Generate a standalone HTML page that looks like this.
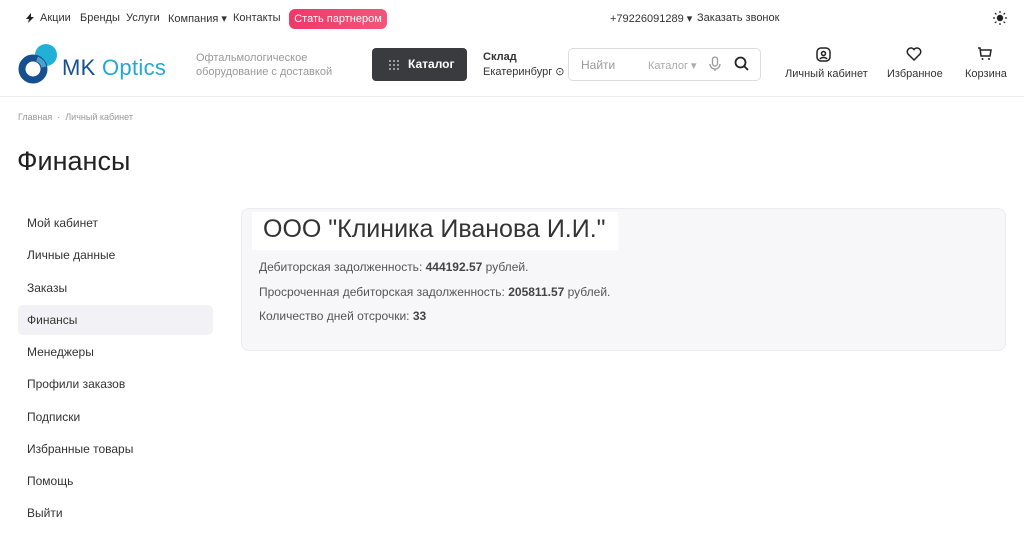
<!DOCTYPE html>
<html><head><meta charset="utf-8"><style>
*{margin:0;padding:0;box-sizing:border-box}
body{width:1024px;height:558px;background:#fff;font-family:"Liberation Sans","DejaVu Sans",sans-serif;color:#333;position:relative;overflow:hidden}
.a{position:absolute;white-space:nowrap}
.t{font-size:11px;color:#333}
.menu div{position:absolute;left:18px;width:195px;height:30px;line-height:30px;padding-left:9px;font-size:12px;color:#333;border-radius:5px}
</style></head><body>
<svg class="a" style="left:25px;top:13px" width="10" height="10" viewBox="0 0 10 10"><path d="M6 0L1 6h3L3 10l6-6H6z" fill="#222"/></svg>
<div class="a t" style="left:40px;top:12px">Акции</div>
<div class="a t" style="left:80px;top:12px">Бренды</div>
<div class="a t" style="left:126px;top:12px">Услуги</div>
<div class="a t" style="left:168px;top:12px">Компания ▾</div>
<div class="a t" style="left:233px;top:12px">Контакты</div>
<div class="a" style="left:289px;top:9px;width:98px;height:20px;border-radius:6px;background:linear-gradient(90deg,#f0386a,#f2557a);color:#fff;font-size:11px;line-height:20px;text-align:center">Стать партнером</div>
<div class="a t" style="left:610px;top:12px">+79226091289 ▾</div>
<div class="a t" style="left:697px;top:12px">Заказать звонок</div>
<svg class="a" style="left:993px;top:11px" width="14" height="14" viewBox="0 0 14 14"><circle cx="7" cy="7" r="3.2" fill="#222"/><g stroke="#222" stroke-width="1.2"><path d="M7 0v2M7 12v2M0 7h2M12 7h2M2 2l1.4 1.4M10.6 10.6L12 12M2 12l1.4-1.4M10.6 3.4L12 2"/></g></svg>
<svg class="a" style="left:18px;top:42px" width="44" height="46" viewBox="0 0 44 46"><circle cx="28" cy="13" r="11" fill="#22b0d6"/><circle cx="15" cy="27" r="11" fill="none" stroke="#16508f" stroke-width="7"/><path d="M19 17a11 11 0 0 1 7 8" stroke="#5fc4e4" stroke-width="5" fill="none" opacity=".7"/></svg>
<div class="a" style="left:62px;top:55px;font-size:22px;color:#16508f;letter-spacing:0.3px">MK <span style="color:#22a8d6">Optics</span></div>
<div class="a" style="left:196px;top:51px;font-size:11px;color:#999;line-height:14px">Офтальмологическое<br>оборудование с доставкой</div>
<div class="a" style="left:372px;top:48px;width:95px;height:33px;background:#3a3b3f;border-radius:4px;color:#fff;font-size:12px;font-weight:bold;line-height:33px;padding-left:36px">Каталог</div>
<svg class="a" style="left:388px;top:59px" width="12" height="12"><g fill="#bbb"><circle cx="2" cy="2" r="1"/><circle cx="6" cy="2" r="1"/><circle cx="10" cy="2" r="1"/><circle cx="2" cy="6" r="1"/><circle cx="6" cy="6" r="1"/><circle cx="10" cy="6" r="1"/><circle cx="2" cy="10" r="1"/><circle cx="6" cy="10" r="1"/><circle cx="10" cy="10" r="1"/></g></svg>
<div class="a" style="left:483px;top:51px;font-size:11px;font-weight:bold;color:#333">Склад</div>
<div class="a t" style="left:483px;top:65px">Екатеринбург ⊙</div>
<div class="a" style="left:568px;top:48px;width:193px;height:33px;border:1px solid #ddd;border-radius:5px"></div>
<div class="a" style="left:581px;top:58px;font-size:12px;color:#999">Найти</div>
<div class="a" style="left:648px;top:59px;font-size:11px;color:#aaa">Каталог ▾</div>
<svg class="a" style="left:709px;top:56px" width="12" height="16" viewBox="0 0 12 16"><rect x="3.5" y="1" width="5" height="9" rx="2.5" fill="none" stroke="#999" stroke-width="1.3"/><path d="M1 8a5 5 0 0 0 10 0M6 13v2" stroke="#999" stroke-width="1.3" fill="none"/></svg>
<svg class="a" style="left:734px;top:56px" width="15" height="15" viewBox="0 0 15 15"><circle cx="6.5" cy="6.5" r="5" fill="none" stroke="#222" stroke-width="1.8"/><path d="M10 10l4 4" stroke="#222" stroke-width="1.8"/></svg>
<svg class="a" style="left:816px;top:46px" width="16" height="16" viewBox="0 0 16 16"><rect x="1" y="2" width="13" height="13" rx="4" fill="none" stroke="#222" stroke-width="1.5"/><circle cx="7.5" cy="7.5" r="2" fill="none" stroke="#222" stroke-width="1.5"/><path d="M4 13a4 3 0 0 1 7 0" stroke="#222" stroke-width="1.5" fill="none"/></svg>
<div class="a t" style="left:785px;top:68px">Личный кабинет</div>
<svg class="a" style="left:906px;top:47px" width="16" height="14" viewBox="0 0 16 14"><path d="M8 13L2 7a3.3 3.3 0 0 1 6-4.5A3.3 3.3 0 0 1 14 7z" fill="none" stroke="#222" stroke-width="1.5"/></svg>
<div class="a t" style="left:887px;top:68px">Избранное</div>
<svg class="a" style="left:977px;top:46px" width="16" height="15" viewBox="0 0 16 15"><path d="M1 2h2l1 8h9l1-6H4" fill="none" stroke="#222" stroke-width="1.5"/><circle cx="5.5" cy="13" r="1" fill="#222"/><circle cx="12" cy="13" r="1" fill="#222"/></svg>
<div class="a t" style="left:965px;top:68px">Корзина</div>
<div class="a" style="left:0;top:96px;width:1024px;height:1px;background:#eee"></div>
<div class="a" style="left:18px;top:112px;font-size:9px;color:#999">Главная &nbsp;·&nbsp; Личный кабинет</div>
<div class="a" style="left:17px;top:146px;font-size:27px;color:#222">Финансы</div>
<div class="menu">
<div style="top:208px">Мой кабинет</div>
<div style="top:240px">Личные данные</div>
<div style="top:273px">Заказы</div>
<div style="top:305px;background:#f2f2f6">Финансы</div>
<div style="top:337px">Менеджеры</div>
<div style="top:369px">Профили заказов</div>
<div style="top:402px">Подписки</div>
<div style="top:434px">Избранные товары</div>
<div style="top:466px">Помощь</div>
<div style="top:498px">Выйти</div>
</div>
<div class="a" style="left:241px;top:208px;width:765px;height:143px;background:#f7f7fa;border:1px solid #ebebef;border-radius:8px"></div>
<div class="a" style="left:252px;top:212px;width:366px;height:38px;background:#fff"></div>
<div class="a" style="left:263px;top:215px;font-size:25px;color:#333">ООО "Клиника Иванова И.И."</div>
<div class="a" style="left:259px;top:260px;font-size:12px;color:#555">Дебиторская задолженность: <b style="color:#444">444192.57</b> рублей.</div>
<div class="a" style="left:259px;top:285px;font-size:12px;color:#555">Просроченная дебиторская задолженность: <b style="color:#444">205811.57</b> рублей.</div>
<div class="a" style="left:259px;top:309px;font-size:12px;color:#555">Количество дней отсрочки: <b style="color:#444">33</b></div>
</body></html>
